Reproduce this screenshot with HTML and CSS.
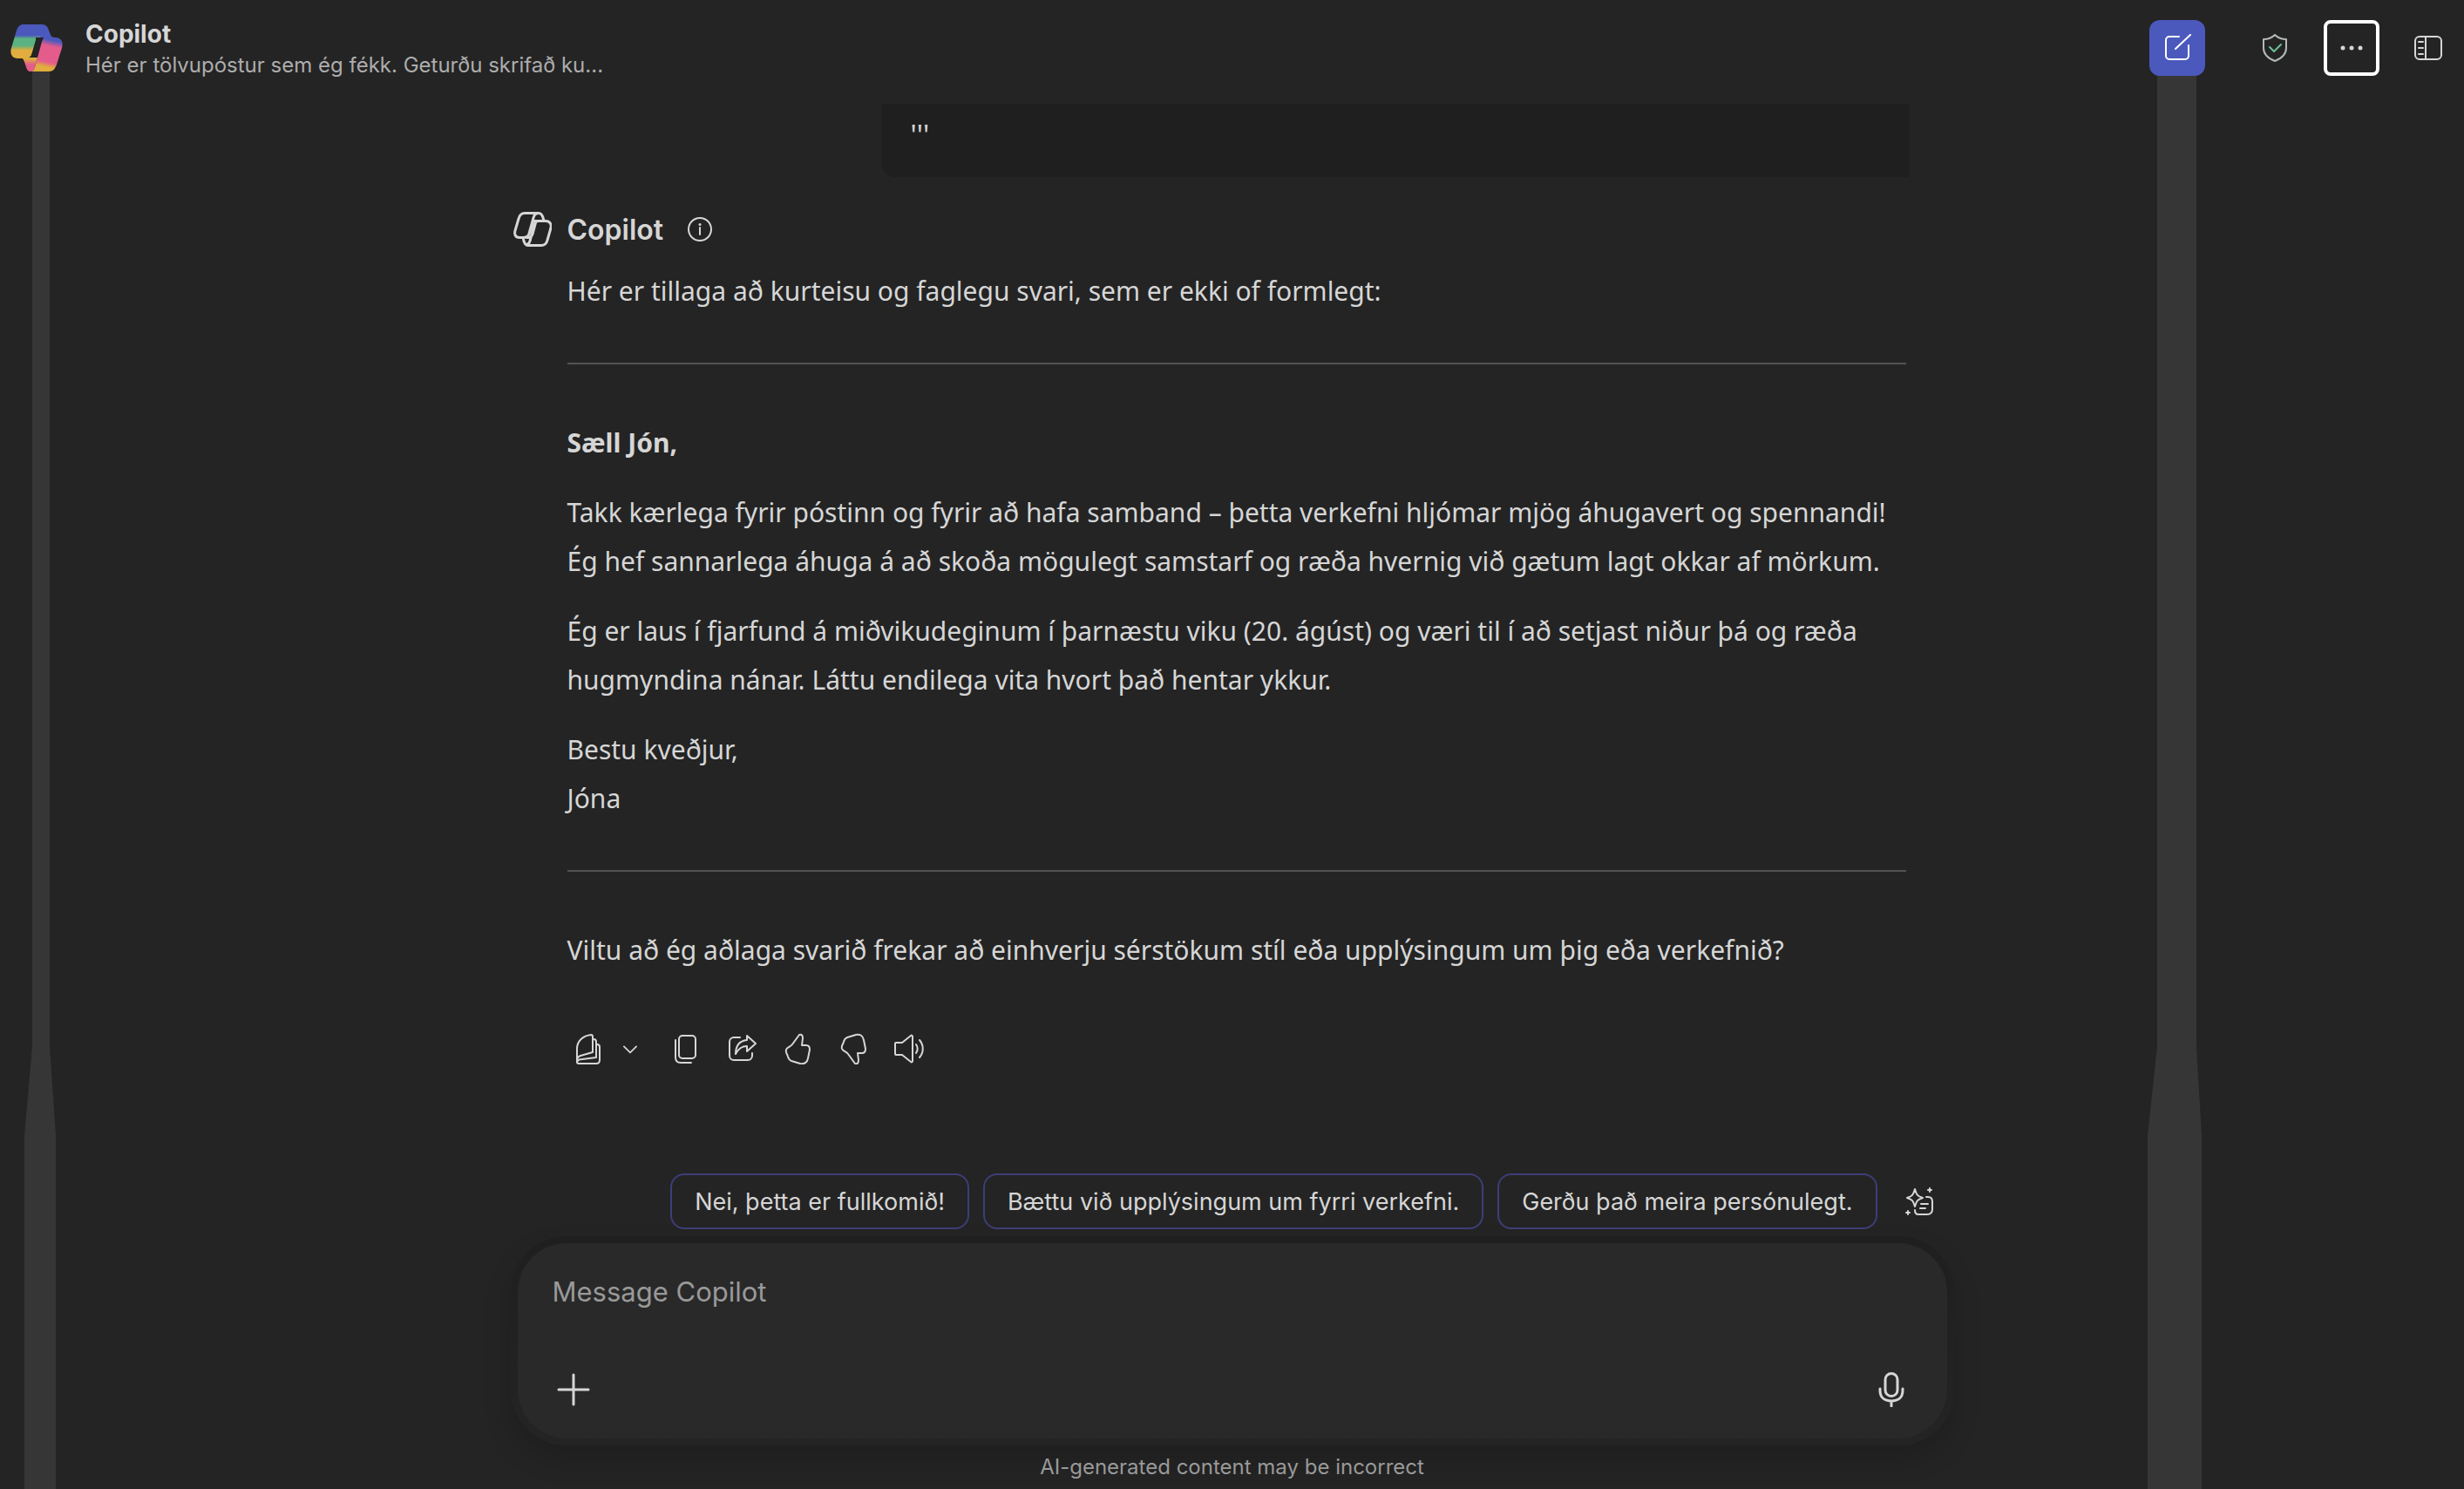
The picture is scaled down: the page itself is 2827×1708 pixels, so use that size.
FILE: index.html
```html
<!DOCTYPE html>
<html lang="is">
  <head>
    <meta charset="utf-8">
    <meta name="viewport" content="width=device-width, initial-scale=1">
    <title>Copilot</title>
    <link rel="stylesheet" href="styles.css">
  </head>
  <body>
    <div class="rail rail_left"></div>
    <div class="rail rail_right"></div>
    <header class="topbar">
      <svg class="logo" viewBox="0 0 60 54">
        <defs>
          <linearGradient id="g1" x1="0" y1="0" x2="0" y2="1">
            <stop offset="0.32" stop-color="#4b59bd"/>
            <stop offset="0.42" stop-color="#5bb281"/>
            <stop offset="0.62" stop-color="#5bb281"/>
            <stop offset="0.76" stop-color="#e0ad3e"/>
          </linearGradient>
          <linearGradient id="g2" x1="0.6" y1="0" x2="0.4" y2="1">
            <stop offset="0.06" stop-color="#4b59bd"/>
            <stop offset="0.24" stop-color="#e45c8c"/>
            <stop offset="0.7" stop-color="#e45c8c"/>
            <stop offset="0.85" stop-color="#e0ad3e"/>
          </linearGradient>
          <linearGradient id="g3" x1="0" y1="0" x2="0" y2="1">
            <stop offset="0.1" stop-color="#e0ad3e"/>
            <stop offset="0.5" stop-color="#e45c8c"/>
          </linearGradient>
        </defs>
        <path fill="#4b59bd" d="M28 0h8c5 0 7 3 8 7l2 5c1 2 2 3 5 3H30z"/>
        <path fill="url(#g1)" d="M15 0h22l-3 15c-3 0-4 1-5 4l-5 16c-1 3-2 4-5 4H8c-6 0-9-5-7-12L7 7c2-5 4-7 8-7z"/>
        <path fill="url(#g2)" d="M38 15h13c7 0 10 5 8 12l-6 19c-2 5-4 8-9 8H22c4 0 5-2 6-5l8-29c1-3 2-4 2-5z"/>
        <path fill="url(#g3)" d="M10 38h21l-3 11c-1 3-2 5-5 5-3 0-4-2-5-5l-2-6c-1-3-2-5-6-5z"/>
        <path fill="#242424" d="M29 15h9c-2 1-3 3-4 6l-5 17h-8c2-1 3-2 4-5l4-15z"/>
      </svg>
      <div class="title">
        <h1>Copilot</h1>
        <p>Hér er tölvupóstur sem ég fékk. Geturðu skrifað ku...</p>
      </div>
      <nav class="tools">
        <button class="tool new_chat" aria-label="New chat">
          <svg viewBox="0 0 32 32"><path d="M18 3H7a4 4 0 0 0-4 4v18a4 4 0 0 0 4 4h18a4 4 0 0 0 4-4V13M14 17 31 1"/></svg>
        </button>
        <button class="tool" aria-label="Protected">
          <svg viewBox="0 0 32 32"><path stroke="#b4bab6" d="M16 1c3 3 8 5 13 5v10c0 8-5 12-13 15C8 28 3 24 3 16V6c5 0 10-2 13-5z"/><path stroke="#6cbf97" d="m10 15 5 5 8-8"/></svg>
        </button>
        <button class="tool more" aria-label="More">
          <svg viewBox="0 0 32 32"><g fill="#d6d6d6" stroke="none"><circle cx="6" cy="16" r="2.500"/><circle cx="16" cy="16" r="2.500"/><circle cx="26" cy="16" r="2.500"/></g></svg>
        </button>
        <button class="tool" aria-label="Side panel">
          <svg viewBox="0 0 32 32"><rect x="1" y="3" width="30" height="26" rx="5"/><path d="M13 3v26M5 9h5M5 16h5M5 23h5"/></svg>
        </button>
      </nav>
    </header>

    <main class="thread">
      <div class="column">
        <div class="bubble">'''</div>
        <article class="reply">
          <div class="author">
            <svg class="mark" viewBox="0 0 44 40"><path d="M13 1.500h16c3 0 4 2 5 5l1 4h2c5 0 7 4 6 8l-4 14c-1 4-3 6-7 6H17c-3 0-4-2-5-5l-1-4H7c-5 0-6-4-5-8L6 8c1-4 3-6.500 7-6.500zM27 2c-3 0-3 2-4 5l-5 18c-1 3-2 4-6 4.500M35 10.500h-6c-3 0-4 1-5 4l-5 19c-1 3-2 4-4 4.500M22 10.500h7M15 29.500c5 0 6-1 7-4l4-15"/></svg>
            <h2>Copilot</h2>
            <button class="info" aria-label="Info">
              <svg viewBox="0 0 28 28"><circle cx="14" cy="14" r="13"/><path d="M14 12v8"/><circle cx="14" cy="8.500" r="1.500" fill="#d6d6d6" stroke="none"/></svg>
            </button>
          </div>
          <div class="text">
            <p>Hér er tillaga að kurteisu og faglegu svari, sem er ekki of formlegt:</p>
            <hr>
            <p><strong>Sæll Jón,</strong></p>
            <p>Takk kærlega fyrir póstinn og fyrir að hafa samband – þetta verkefni hljómar mjög áhugavert og spennandi!<br>Ég hef sannarlega áhuga á að skoða mögulegt samstarf og ræða hvernig við gætum lagt okkar af mörkum.</p>
            <p>Ég er laus í fjarfund á miðvikudeginum í þarnæstu viku (20. ágúst) og væri til í að setjast niður þá og ræða<br>hugmyndina nánar. Láttu endilega vita hvort það hentar ykkur.</p>
            <p>Bestu kveðjur,<br>Jóna</p>
            <hr>
            <p>Viltu að ég aðlaga svarið frekar að einhverju sérstökum stíl eða upplýsingum um þig eða verkefnið?</p>
          </div>
          <div class="actions">
            <button aria-label="Pages"><svg viewBox="0 0 36 36"><path d="M5 34V18C5 9 12 3 21 2c1 0 2 0 2 2v18L9 26c-3 1-4 3-4 6M24 7c2 0 3 1 3 3v18l-16 2c-3 0-5 1-6 3M28 13c2 0 3 1 3 3v15c0 2-1 4-4 4H7c-1 0-2 0-2-2"/></svg></button>
            <button class="arrow" aria-label="More options"><svg viewBox="0 0 36 36"><path d="m10 15 8 8 8-8"/></svg></button>
            <button class="copy" aria-label="Copy"><svg viewBox="0 0 36 36"><rect x="10" y="3" width="19" height="26" rx="4"/><path d="M6 8v20c0 4 2 6 6 6h12"/></svg></button>
            <button aria-label="Share"><svg viewBox="0 0 36 36"><path d="M16 5H9a5 5 0 0 0-5 5v16a5 5 0 0 0 5 5h16a5 5 0 0 0 5-5v-3M24 3l10 9-10 9v-6c-6 0-10 3-13 9 0-9 4-15 13-16z"/></svg></button>
            <button aria-label="Like"><svg viewBox="0 0 36 36"><path d="M20 2c3-1 4 1 4 4l-1 8h5c3 0 4 2 4 5l-2 10c-1 5-4 7-9 6l-10-3c-3-1-3-2-4-5-1-4-3-4-2-8 1-3 5-3 7-6z"/></svg></button>
            <button aria-label="Dislike"><svg viewBox="0 0 36 36"><path d="M20 35c3 1 4-1 4-4l-1-8h5c3 0 4-2 4-5L30 8c-1-5-4-7-9-6L11 5C8 6 8 7 7 10c-1 4-3 4-2 8 1 3 5 3 7 6z"/></svg></button>
            <button aria-label="Read aloud"><svg viewBox="0 0 36 36"><path d="M3 11h7l10-8c1-1 2 0 2 1v28c0 1-1 2-2 1l-10-8H3c-1 0-1-1-1-1V12c0-1 1-1 1-1zM26 13c2 3 2 7 0 10M30 8c5 6 5 14 0 20"/></svg></button>
          </div>
        </article>
      </div>
    </main>

    <footer class="column">
      <div class="suggestions">
        <button class="chip">Nei, þetta er fullkomið!</button>
        <button class="chip">Bættu við upplýsingum um fyrri verkefni.</button>
        <button class="chip">Gerðu það meira persónulegt.</button>
        <button class="prompts" aria-label="Prompts">
          <svg viewBox="0 0 34 34"><path d="M12 3c2 7 3 8 9 10-6 2-7 3-9 10-2-7-3-8-9-10 6-2 7-3 9-10zM25 12h2c3 0 5 2 5 5v9c0 4-2 6-6 6H16c-3 0-4-2-4-5M19 20h8M18 25h6"/><path d="M29 2v4M27 4h4M4 28v4M2 30h4"/></svg>
        </button>
      </div>
      <form class="ring">
        <div class="composer">
          <textarea rows="1" placeholder="Message Copilot" aria-label="Message Copilot"></textarea>
          <div class="composer_tools">
            <button type="button" aria-label="Add"><svg viewBox="0 0 40 40"><path d="M20 3v34M3 20h34"/></svg></button>
            <button type="button" aria-label="Dictate"><svg viewBox="0 0 40 40"><rect x="13" y="1.500" width="14" height="26" rx="7"/><path d="M7 19v2c0 8 5 12 13 12s13-4 13-12v-2M20 33v6"/></svg></button>
          </div>
        </div>
      </form>
      <p class="disclaimer">AI-generated content may be incorrect</p>
    </footer>
  </body>
</html>
```
FILE: styles.css
```css
* {
  margin: 0;
  padding: 0;
  box-sizing: border-box;
}
body {
  display: flex;
  flex-direction: column;
  height: 100vh;
  overflow: hidden;
  position: relative;
  background-color: #242424;
  color: #d6d6d6;
  font-family: Inter, sans-serif;
}
button {background: none;border: none;color: inherit;font: inherit;display: flex;align-items: center;justify-content: center;}
svg {display: block;fill: none;stroke: #d6d6d6;stroke-width: 2;stroke-linecap: round;stroke-linejoin: round;}

/* vertical shapes behind the page */
.rail {position: absolute;bottom: 0;background-color: #363636;}
.rail_left {left: 28px;top: 76px;width: 36px;clip-path: polygon(9px 0, 29px 0, 29px 1124px, 100% 1227px, 100% 100%, 0 100%, 0 1227px, 9px 1124px);}
.rail_right {right: 301px;top: 80px;width: 62px;clip-path: polygon(11px 0, 56px 0, 56px 1120px, 100% 1223px, 100% 100%, 0 100%, 0 1223px, 11px 1120px);}

.topbar {position: relative;display: flex;align-items: flex-start;height: 119px;padding: 23px 9px 0 12px;}
.logo {width: 60px;height: 54px;margin: 5px 26px 0 0;stroke: none;}
.title h1 {font-size: 28px;line-height: 32px;font-weight: 700;}
.title p {font-size: 24px;line-height: 40px;color: #adadad;}
.tools {display: flex;gap: 24px;margin-left: auto;}
.tool {width: 64px;height: 64px;border-radius: 8px;}
.tool svg {width: 32px;height: 32px;}
.new_chat {background-color: #4b59bd;border-radius: 12px;margin-right: 24px;}
.new_chat svg {stroke: #fff;}
.more {border: 4px solid #fff;}

.column {width: 100%;max-width: 1656px;margin: 0 auto;}
.thread {flex: 1;overflow: hidden;}
.bubble {
  height: 84px;
  margin: 0 51px 0 425px;
  padding: 8px 34px;
  background-color: #1f1f1f;
  border-radius: 0 0 4px 16px;
  font-family: "Noto Sans", sans-serif;
  font-size: 32px;
  line-height: 56px;
}
.reply {padding: 32px 55px 0 3px;}
.author {display: flex;align-items: center;height: 56px;}
.author h2 {font-size: 32px;font-weight: 600;margin: 0 28px 0 18px;}
.mark {width: 44px;height: 40px;stroke-width: 3;}
.info svg {width: 28px;height: 28px;}
.text {
  margin: 15px 0 0 62px;
  font-family: "Noto Sans", sans-serif;
  font-size: 30px;
  line-height: 56px;
}
.text p + p {margin-top: 24px;}
.text hr {height: 2px;margin: 54px 0 62px;border: none;background-color: #525252;}
.actions {display: flex;margin: 53px 0 0 54px;}
.actions button {width: 64px;height: 64px;}
.actions svg {width: 36px;height: 36px;}
.actions .arrow {width: 32px;}
.actions .copy {margin-left: 16px;}

.suggestions {display: flex;justify-content: flex-end;gap: 16px;padding-right: 8px;}
.chip {height: 64px;padding: 0 26px;border: 2px solid #3d3e78;border-radius: 16px;font-size: 27px;white-space: nowrap;}
.prompts {width: 64px;height: 64px;}
.prompts svg {width: 34px;height: 34px;}
.ring {
  margin-top: 8px;
  padding: 8px;
  border-radius: 64px;
  background: linear-gradient(#1f1f1f, #242424);
  box-shadow: 0 16px 32px rgba(0, 0, 0, 0.16);
}
.composer {display: flex;flex-direction: column;justify-content: space-between;height: 224px;padding: 32px 40px 36px;border-radius: 56px;background-color: #292929;}
.composer textarea {height: 48px;background: none;border: none;resize: none;outline: none;overflow: hidden;color: #d6d6d6;font: 31px/48px Inter, sans-serif;}
.composer textarea::placeholder {color: #999;opacity: 1;}
.composer_tools {display: flex;justify-content: space-between;padding: 0 2px;}
.composer_tools button, .composer_tools svg {width: 44px;height: 40px;}
.composer_tools svg {stroke-width: 3;}
.disclaimer {text-align: center;font-size: 24px;line-height: 50px;color: #999;}
```
